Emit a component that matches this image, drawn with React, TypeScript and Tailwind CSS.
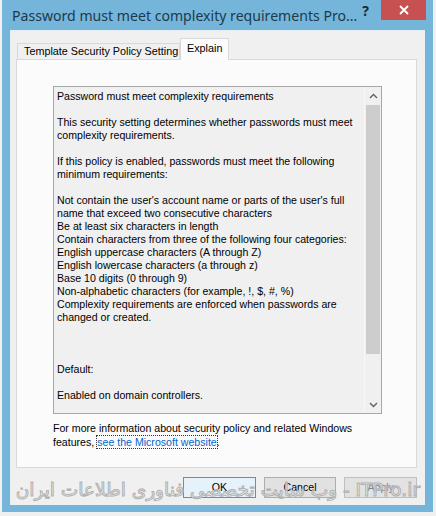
import React from 'react';

const lines: string[] = [
  'Password must meet complexity requirements',
  '',
  'This security setting determines whether passwords must meet',
  'complexity requirements.',
  '',
  'If this policy is enabled, passwords must meet the following',
  'minimum requirements:',
  '',
  "Not contain the user's account name or parts of the user's full",
  'name that exceed two consecutive characters',
  'Be at least six characters in length',
  'Contain characters from three of the following four categories:',
  'English uppercase characters (A through Z)',
  'English lowercase characters (a through z)',
  'Base 10 digits (0 through 9)',
  'Non-alphabetic characters (for example, !, $, #, %)',
  'Complexity requirements are enforced when passwords are',
  'changed or created.',
  '',
  '',
  '',
  'Default:',
  '',
  'Enabled on domain controllers.',
];

const Chevron = ({ up }: { up?: boolean }) => (
  <svg width="9" height="6" viewBox="0 0 9 6" className={up ? '' : 'rotate-180'}>
    <path d="M1 5 L4.5 1.5 L8 5" fill="none" stroke="#606060" strokeWidth="1.4" />
  </svg>
);

export default function App() {
  return (
    <div className="relative w-[436px] h-[516px] overflow-hidden bg-[#f0f0f0] font-['Liberation_Sans',Arial,sans-serif] text-[10.6px] text-black">
      {/* window frame */}
      <div className="ml-[2px] w-[431px] h-[512px] bg-[#74b5d9] flex flex-col">
        {/* title bar */}
        <div className="h-[30px] flex items-start">
          <div className="pl-[10px] pt-[6px] text-[14.1px] leading-[20px] text-[#1d3a4c] font-['Noto_Sans',sans-serif] whitespace-nowrap">
            Password must meet complexity requirements Pro...
          </div>
          <div className="ml-auto pt-[3px] pr-[12px] text-[14px] font-bold text-[#1d2a36] font-['Noto_Sans',sans-serif] leading-[16px]">?</div>
          <div className="w-[45px] h-[20px] mr-[7px] bg-[#c75050] flex items-center justify-center">
            <svg width="10" height="10" viewBox="0 0 10 10">
              <path d="M1 1 L9 9 M9 1 L1 9" stroke="#fff" strokeWidth="1.8" />
            </svg>
          </div>
        </div>

        {/* client area */}
        <div className="mx-[8px] h-[475px] bg-[#f0f0f0] border-l border-t border-[#e4eef4] flex flex-col pl-[5px] pr-[8px] pt-[6px]">
          {/* tabs */}
          <div className="flex items-end h-[22px] relative z-10">
            <div className="ml-[1px] h-[16px] pl-[6px] border border-b-0 border-[#d9d9d9] bg-[#f0f0f0] flex items-center leading-none whitespace-nowrap w-[163px] text-[10.8px]">
              Template Security Policy Setting
            </div>
            <div className="h-[22px] w-[49px] border border-b-0 border-[#d9d9d9] bg-[#fbfbfb] flex items-start pt-[4px] pl-[6px] leading-none -mb-[1px] text-[10.8px]">
              Explain
            </div>
          </div>

          {/* tab panel */}
          <div className="h-[409px] border border-[#d9d9d9] bg-[#fbfbfb] flex flex-col pl-[36px] pr-[34px] pt-[26px]">
            {/* read-only text box */}
            <div className="h-[328px] border border-[#a8a8a8] bg-[#f0f0f0] flex">
              <div className="flex-1 pl-[3px] pt-[3px] leading-[13px] whitespace-pre">
                {lines.map((l, i) => (
                  <div key={i} className="h-[13px]">{l}</div>
                ))}
              </div>
              <div className="w-[17px] flex flex-col bg-[#f0f0f0] border-l border-[#f7f7f7]">
                <div className="h-[17px] flex items-center justify-center"><Chevron up /></div>
                <div className="mt-[1px] h-[249px] mx-[1px] bg-[#cdcdcd]" />
                <div className="flex-1" />
                <div className="h-[17px] flex items-center justify-center"><Chevron /></div>
              </div>
            </div>

            <div className="mt-[7px] leading-[14px]">
              <div>For more information about security policy and related Windows</div>
              <div>
                features,{' '}
                <span className="text-[#0066cc] outline outline-1 outline-dotted outline-[#333]">see the Microsoft website</span>.
              </div>
            </div>
          </div>

          {/* buttons */}
          <div className="mt-[9px] flex gap-[8px] pl-[167px]">
            <div className="w-[73px] h-[21px] border border-[#3399ff] bg-[#e5f1fb] flex items-center justify-center">OK</div>
            <div className="w-[73px] h-[21px] border border-[#adadad] bg-[#e1e1e1] flex items-center justify-center">Cancel</div>
            <div className="w-[73px] h-[21px] border border-[#bfbfbf] bg-[#cccccc]/40 flex items-center justify-center text-[#838383]">Apply</div>
          </div>
        </div>
      </div>

      {/* watermark */}
      <div
        dir="rtl"
        className="absolute right-[16px] top-[477px] whitespace-nowrap text-[18.5px] leading-[26px] text-white/60 font-['DejaVu_Sans',sans-serif] [-webkit-text-stroke:1px_#b0b0b0]"
      >
        ITPro.ir - وب سایت تخصصی فناوری اطلاعات ایران
      </div>
    </div>
  );
}
